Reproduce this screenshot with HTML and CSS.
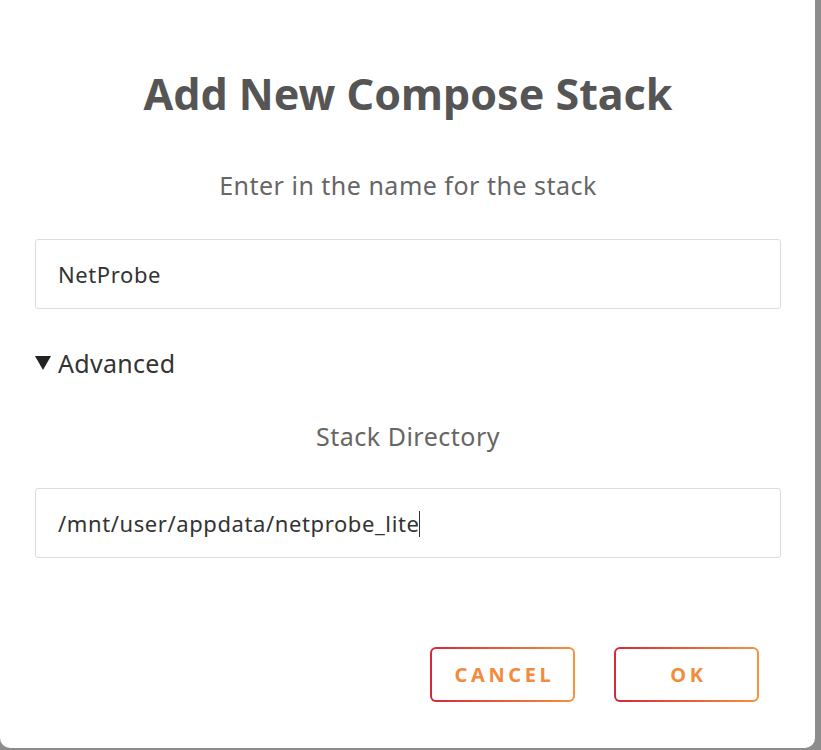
FILE: index.html
```html
<!DOCTYPE html>
<html lang="en">
<head>
    <meta charset="UTF-8">
    <meta name="viewport" content="width=device-width, initial-scale=1.0">
    <title>Add New Compose Stack</title>
    <link rel="stylesheet" href="styles.css">
</head>
<body>
    <div class="dialog">
        <h2 class="dialog-title">Add New Compose Stack</h2>
        <p class="field-label name-label">Enter in the name for the stack</p>
        <input class="text-input" type="text" value="NetProbe">

        <details class="advanced" open>
            <summary>Advanced</summary>
            <p class="field-label dir-label">Stack Directory</p>
            <div class="text-input path-input">/mnt/user/appdata/netprobe_lite<span class="caret"></span></div>
        </details>

        <div class="dialog-buttons">
            <button class="grad-button">CANCEL</button>
            <button class="grad-button">OK</button>
        </div>
    </div>
</body>
</html>
```

FILE: styles.css
```css
body {
    margin: 0;
    background-color: #8c8c8c;
    font-family: "Noto Sans", "Open Sans", sans-serif;
    height: 750px;
    overflow: hidden;
}
.dialog {
    background-color: #fff;
    width: 815px;
    height: 748px;
    border-radius: 0 0 10px 10px;
    box-sizing: border-box;
    padding: 64px 34px 0 35px;
}
.dialog-title {
    margin: 0;
    text-align: center;
    font-size: 43px;
    font-weight: bold;
    color: #555;
    line-height: 60px;
}
.field-label {
    text-align: center;
    color: #666;
    font-size: 25px;
    letter-spacing: 0.5px;
    line-height: 30px;
    margin: 0;
}
.name-label {
    margin-top: 46px;
}
.text-input {
    display: block;
    box-sizing: border-box;
    width: 746px;
    height: 70px;
    border: 1px solid #ddd;
    border-radius: 3px;
    padding: 0 22px;
    font-family: inherit;
    font-size: 22px;
    letter-spacing: 0.6px;
    color: #333;
    margin-top: 39px;
    outline: none;
    line-height: 68px;
}
.advanced summary {
    list-style: none;
    display: flex;
    align-items: center;
    gap: 7px;
    margin-top: 38px;
    font-size: 25px;
    letter-spacing: 0.3px;
    color: #333;
    line-height: 32px;
    cursor: pointer;
}
.advanced summary::before {
    content: "";
    border-left: 8px solid transparent;
    border-right: 8px solid transparent;
    border-top: 14px solid #222;
}
.dir-label {
    margin-top: 42px;
}
.path-input {
    margin-top: 37px;
}
.caret {
    display: inline-block;
    width: 1px;
    height: 26px;
    background-color: #333;
    vertical-align: -5px;
}
.dialog-buttons {
    display: flex;
    justify-content: flex-end;
    gap: 39px;
    margin-top: 89px;
    padding-right: 22px;
}
.grad-button {
    width: 145px;
    height: 55px;
    border: 2px solid transparent;
    border-radius: 6px;
    background:
        linear-gradient(#fff, #fff) padding-box,
        linear-gradient(90deg, #d8263a, #f7923d) border-box;
    color: #f28b3c;
    font-family: inherit;
    font-size: 20px;
    font-weight: bold;
    letter-spacing: 3.6px;
    cursor: pointer;
    padding: 0 0 0 4px;
}
```
